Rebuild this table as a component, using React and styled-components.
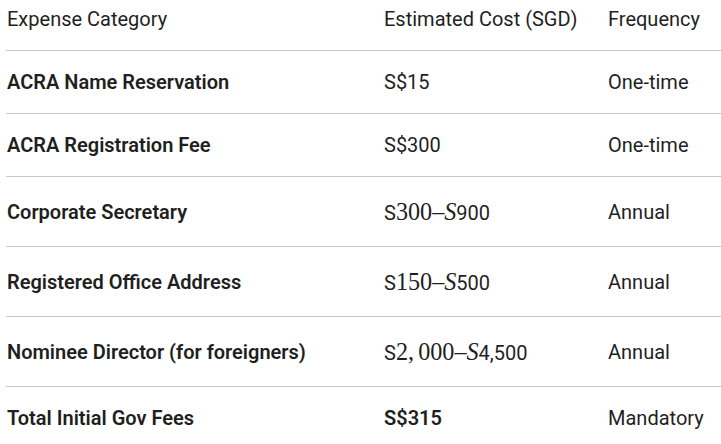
import React from "react";
import styled, { createGlobalStyle } from "styled-components";

const Global = createGlobalStyle`
  html, body { margin: 0; padding: 0; background: #ffffff; }
  body {
    font-family: Roboto, "Noto Sans", "Liberation Sans", sans-serif;
    color: #1f1f1f;
    -webkit-font-smoothing: antialiased;
  }
`;

const Wrap = styled.div`
  padding-left: 6px;
  overflow: hidden;
  width: 721px;
  box-sizing: border-box;
`;

const Table = styled.div`
  width: 715px;
  display: flex;
  flex-direction: column;
`;

const Row = styled.div`
  display: grid;
  grid-template-columns: 377px 224px 1fr;
  align-items: center;
  border-top: ${(p) => (p.$first ? "none" : "1px solid #c8c8c8")};
  font-size: 20px;
  line-height: 1.5;
`;

const Cell = styled.div`
  padding: ${(p) => (p.$head ? "4px 16px 16px 1px" : "16px 16px 16px 1px")};
  font-weight: ${(p) => (p.$bold ? 600 : 400)};
  white-space: nowrap;
`;

const Math = styled.span`
  font-family: "Liberation Serif", "DejaVu Serif", serif;
  font-size: 1.21em;
  line-height: 1.53;
  font-weight: 400;
`;

const MathVar = styled.i`
  font-style: italic;
`;

const Comma = styled.span`
  margin-right: 0.17em;
`;

const rows = [
  { cat: "ACRA Name Reservation", cost: "S$15", freq: "One-time" },
  { cat: "ACRA Registration Fee", cost: "S$300", freq: "One-time" },
  {
    cat: "Corporate Secretary",
    cost: (
      <>
        S<Math>300–<MathVar>S</MathVar></Math>900
      </>
    ),
    freq: "Annual",
  },
  {
    cat: "Registered Office Address",
    cost: (
      <>
        S<Math>150–<MathVar>S</MathVar></Math>500
      </>
    ),
    freq: "Annual",
  },
  {
    cat: "Nominee Director (for foreigners)",
    cost: (
      <>
        S<Math>2<Comma>,</Comma>000–<MathVar>S</MathVar></Math>4,500
      </>
    ),
    freq: "Annual",
  },
];

export default function App() {
  return (
    <>
      <Global />
      <Wrap>
        <Table>
          <Row $first>
            <Cell $head>Expense Category</Cell>
            <Cell $head>Estimated Cost (SGD)</Cell>
            <Cell $head>Frequency</Cell>
          </Row>
          {rows.map((r) => (
            <Row key={r.cat}>
              <Cell $bold>{r.cat}</Cell>
              <Cell>{r.cost}</Cell>
              <Cell>{r.freq}</Cell>
            </Row>
          ))}
          <Row>
            <Cell $bold>Total Initial Gov Fees</Cell>
            <Cell $bold>S$315</Cell>
            <Cell>Mandatory</Cell>
          </Row>
        </Table>
      </Wrap>
    </>
  );
}
